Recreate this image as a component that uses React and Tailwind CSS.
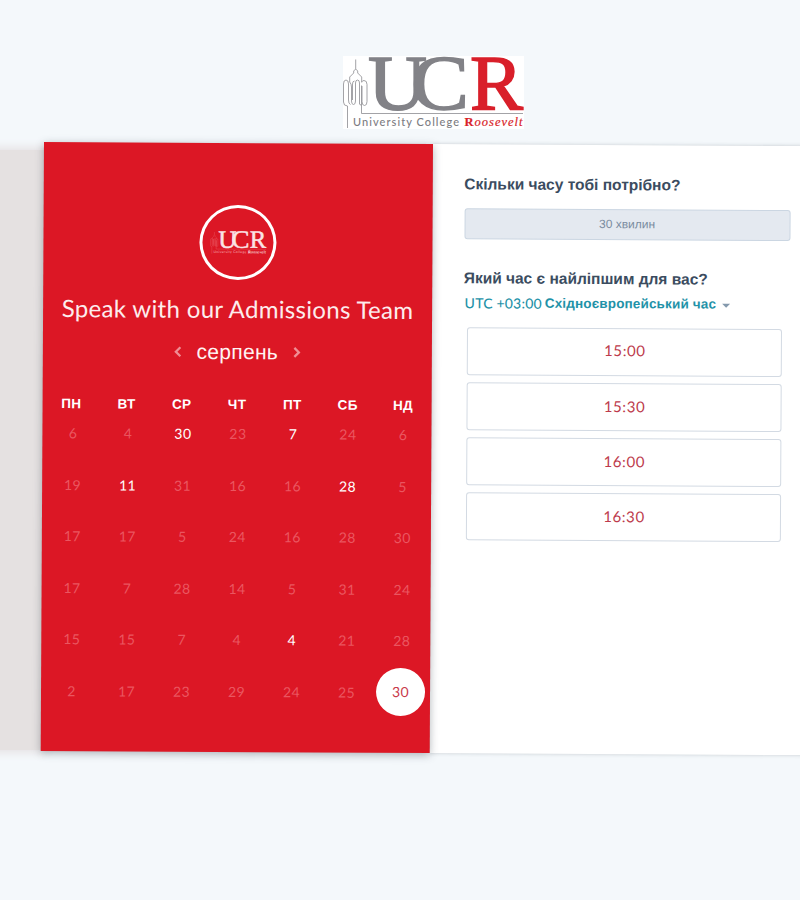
const WEEKDAYS = ['ПН', 'ВТ', 'СР', 'ЧТ', 'ПТ', 'СБ', 'НД'];

const WEEKS = [
  [6, 4, 30, 23, 7, 24, 6],
  [19, 11, 31, 16, 16, 28, 5],
  [17, 17, 5, 24, 16, 28, 30],
  [17, 7, 28, 14, 5, 31, 24],
  [15, 15, 7, 4, 4, 21, 28],
  [2, 17, 23, 29, 24, 25, 30],
];

// "row-column" keys of the days that can be booked
const AVAILABLE = new Set(['0-2', '0-4', '1-1', '1-5', '4-4']);
const SELECTED = '5-6';

const SLOTS = ['15:00', '15:30', '16:00', '16:30'];

function Logo({ className, letters, accent, line, caption }) {
  return (
    <svg viewBox="0 0 181 73" preserveAspectRatio="none" overflow="visible" className={className}>
      <g fill="none" stroke={line} strokeWidth="1" strokeOpacity=".85">
        <path d="M12.700 3.500V13l-2 2v2l-4 4v5M12.700 13l2 2v2l4 4v5.500" />
        <path d="M4.500 72V50q-4 0-4-4V28q0-4 2.500-4T5.500 28v16q0 4 2 4.500M6.700 26q1.800 2 1.800 5v14q0 3.500 2 3.500t2-3.500V27q0-3 2-3t2 3v21q0 1 2 1" />
        <path d="M9.500 44V28q0-3 2-3" />
        <path d="M18.500 57.500V29.500M18.500 26q1-1.500 2.500-1.500 3 0 3 4v17q0 4-2.500 4t-2.500-4V30M18.500 57.500H180" />
      </g>
      <g fontFamily="'Liberation Serif', serif" fontSize="79" strokeWidth="1.600">
        <text x="25" y="53" fill={letters} stroke={letters} textLength="59" lengthAdjust="spacingAndGlyphs">U</text>
        <text x="68" y="53" fill={letters} stroke={letters} textLength="58" lengthAdjust="spacingAndGlyphs">C</text>
        <text x="127" y="53" fill={accent} stroke={accent} textLength="53" lengthAdjust="spacingAndGlyphs">R</text>
      </g>
      <text x="10" y="70" fill={caption} fontFamily="Lato, sans-serif" fontWeight="500" fontSize="11" textLength="106" lengthAdjust="spacing">University College</text>
      <text x="121.500" y="70" fill={accent} stroke={accent} strokeWidth=".2" fontFamily="'Liberation Serif', serif" fontStyle="italic" fontSize="12.500" textLength="58" lengthAdjust="spacing">
        <tspan fontStyle="normal" fontWeight="bold">R</tspan>oosevelt
      </text>
    </svg>
  );
}

function Chevron({ d }) {
  return (
    <svg viewBox="0 0 8 12" className="h-3 w-2" fill="none" stroke="#f08d94" strokeWidth="2.300">
      <path d={d} />
    </svg>
  );
}

function Day({ value, id }) {
  if (id === SELECTED) {
    return (
      <span className="-ml-0.5 flex h-12 w-[49px] items-center justify-center rounded-[50%] bg-white pb-0.5 text-[#c93a4b]">
        {value}
      </span>
    );
  }
  return <span className={AVAILABLE.has(id) ? 'text-white' : 'text-[#ea5660]'}>{value}</span>;
}

function Calendar() {
  return (
    <section className="flex h-[609px] w-[389px] shrink-0 flex-col items-center bg-[#dc1725] pt-[62px] shadow-[0_2px_9px_rgba(60,70,80,0.4)]">
      <div className="flex h-[75px] w-[77px] shrink-0 items-center justify-center rounded-[50%] border-[3px] border-white">
        <Logo className="h-[23px] w-14" letters="#fbe3e5" accent="#fbe3e5" line="#ee7c85" caption="#f4a5ab" />
      </div>
      <h1 className="mt-[11px] h-9 whitespace-nowrap font-[Lato,sans-serif] text-[24px] leading-9 tracking-[0.33px] text-[#fdeced]">
        Speak with our Admissions Team
      </h1>
      <div className="mt-[9px] flex h-8 items-center gap-[15px]">
        <Chevron d="M6.500 1.500 2 6l4.500 4.500" />
        <span className="font-['Liberation_Sans',sans-serif] text-[21px] leading-8 tracking-[0.3px] text-[#fff3f3]">серпень</span>
        <Chevron d="M1.500 1.500 6 6l-4.500 4.500" />
      </div>
      <div className="mt-[27px] grid w-[387px] grid-cols-7 text-center font-['Liberation_Sans',sans-serif] text-[13.5px] font-bold leading-5 tracking-[0.3px] text-white">
        {WEEKDAYS.map((d) => (
          <span key={d}>{d}</span>
        ))}
      </div>
      <div className="-mt-[7px] w-[387px] pl-0.5 font-[Lato,sans-serif] text-[14px] tracking-[0.4px]">
        {WEEKS.map((week, r) => (
          <div key={r} className="grid h-[51.5px] grid-cols-7">
            {week.map((value, c) => (
              <div key={c} className="flex items-center justify-center">
                <Day value={value} id={`${r}-${c}`} />
              </div>
            ))}
          </div>
        ))}
      </div>
    </section>
  );
}

function Times() {
  return (
    <section className="h-[609px] w-[400px] shrink-0 bg-white pl-[31.5px] pt-[29.5px] font-['Liberation_Sans',sans-serif] shadow-[0_0_4px_rgba(60,70,80,0.25)]">
      <h2 className="h-5 whitespace-nowrap text-[15.5px] font-bold leading-5 text-[#3b4c60]">Скільки часу тобі потрібно?</h2>
      <div className="mt-3.5 flex h-[31px] w-[326px] items-center justify-center rounded-[3px] border border-[#cbd6e2] bg-[#e4e9f0] text-[12px] text-[#7a8ca0]">
        30 хвилин
      </div>
      <h2 className="mt-[29px] h-5 whitespace-nowrap text-[15.5px] font-bold leading-5 text-[#3b4c60]">Який час є найліпшим для вас?</h2>
      <div className="mt-[5px] flex h-5 items-center whitespace-nowrap leading-5 text-[#1f92a8]">
        <span className="ml-px font-[Lato,sans-serif] text-[14px] font-medium tracking-[0.2px]">UTC +03:00</span>
        <span className="ml-[3px] text-[13.5px] font-bold tracking-[0.15px]">Східноєвропейський час</span>
        <span className="ml-1.5 mt-0.5 border-x-4 border-t-4 border-x-transparent border-t-[#8499ad]" />
      </div>
      <div className="ml-[3.5px] mt-3.5 flex w-[315px] flex-col gap-[7.3px]">
        {SLOTS.map((t) => (
          <button
            key={t}
            className="h-12 rounded-[3px] border border-[#d3dae3] bg-white pb-0.5 pl-px font-[Lato,sans-serif] text-[15px] tracking-[0.6px] text-[#bd3b4c]"
          >
            {t}
          </button>
        ))}
      </div>
    </section>
  );
}

export default function App() {
  return (
    <main className="h-[900px] w-[800px] overflow-hidden bg-[#f4f8fb]">
      <header className="ml-[343px] pt-14">
        <Logo className="h-[73px] w-[181px] bg-white" letters="#828287" accent="#d91f2a" line="#939398" caption="#7c7c82" />
      </header>
      <div className="mt-[13px] flex">
        <div className="-ml-3 mt-2 h-[600px] w-14 shrink-0 bg-[#e5e1e1] shadow-[0_0_8px_3px_#e7e3e5]" />
        <div className="flex origin-top-left rotate-[0.31deg]">
          <div className="relative z-10">
            <Calendar />
          </div>
          <Times />
        </div>
      </div>
    </main>
  );
}
